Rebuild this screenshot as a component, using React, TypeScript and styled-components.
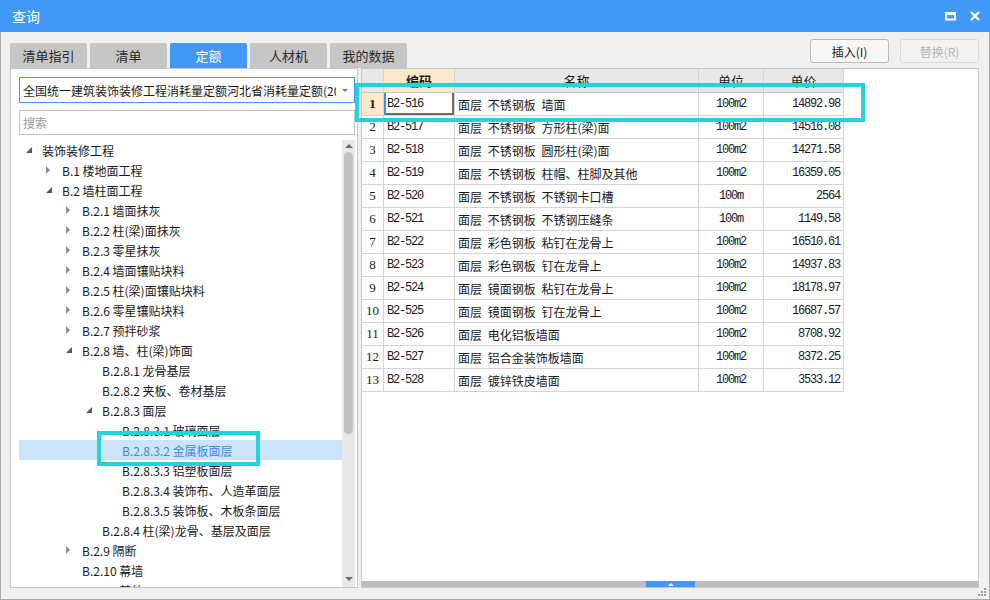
import React from 'react'
import styled, { createGlobalStyle } from 'styled-components'

const BLUE = '#4298f7'
const CJK = "'Noto Sans CJK SC', 'Microsoft YaHei', sans-serif"
const MONO = "'Liberation Mono', 'Noto Sans CJK SC', monospace"

const GlobalStyle = createGlobalStyle`
  html, body {
    margin: 0;
    padding: 0;
    background: #f0f0f0;
  }
  body {
    font-family: ${CJK};
    font-size: 12px;
    color: #1a1a1a;
  }
`

const Window = styled.div`
  position: relative;
  width: 990px;
  height: 600px;
  display: flex;
  flex-direction: column;
  background: #f0f0f0;
  overflow: hidden;
`

const TitleBar = styled.div`
  height: 32px;
  flex: none;
  background: ${BLUE};
  color: white;
  display: flex;
  align-items: center;
  justify-content: space-between;
  padding: 0 10px 0 12px;
  font-size: 14px;
  line-height: 32px;
`

const TitleIcons = styled.div`
  display: flex;
  align-items: center;
  gap: 14px;
`

const Body = styled.div`
  flex: 1;
  box-sizing: border-box;
  border: 1px solid #a9a9a9;
  border-top: none;
  padding: 7px 10px 0 9px;
  display: flex;
  flex-direction: column;
`

const TopRow = styled.div`
  height: 29px;
  display: flex;
  justify-content: space-between;
`

const Tabs = styled.div`
  display: flex;
  gap: 3px;
  align-self: flex-end;
`

const Tab = styled.div<{ $active?: boolean }>`
  width: 77px;
  height: 25px;
  border-radius: 2px 2px 0 0;
  display: flex;
  align-items: center;
  justify-content: center;
  font-size: 13px;
  background: ${p => (p.$active ? BLUE : '#c6c6c6')};
  color: ${p => (p.$active ? '#fff' : '#2a2a2a')};
`

const Buttons = styled.div`
  display: flex;
  gap: 11px;
  align-self: flex-start;
`

const ActionButton = styled.div<{ $disabled?: boolean }>`
  width: 79px;
  height: 24px;
  box-sizing: border-box;
  border: 1px solid ${p => (p.$disabled ? '#d9d9d9' : '#b9b9b9')};
  border-radius: 3px;
  background: ${p => (p.$disabled ? '#f3f3f3' : '#f7f7f7')};
  color: ${p => (p.$disabled ? '#b3b3b3' : '#1a1a1a')};
  display: flex;
  align-items: center;
  justify-content: center;
  font-size: 12px;
`

const Main = styled.div`
  height: 520px;
  display: flex;
  gap: 3px;
`

const LeftPanel = styled.div`
  width: 348px;
  box-sizing: border-box;
  border: 1px solid #c6c6c6;
  background: white;
  padding: 8px 2px 0 8px;
  display: flex;
  flex-direction: column;
`

const Dropdown = styled.div`
  height: 26px;
  box-sizing: border-box;
  border: 1px solid ${BLUE};
  display: flex;
  align-items: center;
  padding: 0 6px 0 3px;
  font-size: 12px;
`

const DropdownText = styled.div`
  flex: 1;
  overflow: hidden;
  white-space: nowrap;
  margin-right: 6px;
`

const Caret = styled.div`
  width: 0;
  height: 0;
  border-left: 3px solid transparent;
  border-right: 3px solid transparent;
  border-top: 3px solid #7a7a7a;
`

const Search = styled.div`
  margin-top: 7px;
  height: 25px;
  box-sizing: border-box;
  border: 1px solid #c3c3c3;
  display: flex;
  align-items: center;
  padding-left: 3px;
  color: #9a9a9a;
  font-size: 12px;
`

const TreeArea = styled.div`
  margin-top: 5px;
  flex: 1;
  display: flex;
  overflow: hidden;
`

const Tree = styled.div`
  flex: 1;
  overflow: hidden;
`

const TreeRow = styled.div<{ $level: number; $selected?: boolean }>`
  height: 20px;
  display: flex;
  align-items: center;
  padding-left: ${p => 7 + p.$level * 20}px;
  white-space: nowrap;
  font-size: 12px;
  background: ${p => (p.$selected ? '#cce4f7' : 'transparent')};
  color: ${p => (p.$selected ? '#3a8be4' : '#1a1a1a')};
`

const Toggle = styled.span`
  width: 16px;
  flex: none;
  display: flex;
  align-items: center;
`

const Closed = styled.span`
  width: 0;
  height: 0;
  border-left: 4px solid #8c8c8c;
  border-top: 4px solid transparent;
  border-bottom: 4px solid transparent;
`

const Opened = styled.span`
  width: 0;
  height: 0;
  border-left: 6px solid transparent;
  border-bottom: 6px solid #595959;
`

const VScroll = styled.div`
  width: 13px;
  background: #e8e8e8;
  display: flex;
  flex-direction: column;
  align-items: center;
`

const ScrollArrow = styled.div<{ $down?: boolean }>`
  width: 0;
  height: 0;
  margin: ${p => (p.$down ? 'auto 0 6px' : '4px 0 4px')};
  border-left: 4px solid transparent;
  border-right: 4px solid transparent;
  ${p => (p.$down ? 'border-top: 4px solid #6e6e6e;' : 'border-bottom: 4px solid #6e6e6e;')}
`

const Thumb = styled.div`
  width: 9px;
  height: 282px;
  border-radius: 5px;
  background: #c2c2c2;
`

const RightPanel = styled.div`
  flex: 1;
  box-sizing: border-box;
  border: 1px solid #c6c6c6;
  background: white;
  display: flex;
  flex-direction: column;
`

const Grid = styled.div`
  display: grid;
  grid-template-columns: 22px 71px 244px 65px 80px;
  width: 482px;
`

const Cell = styled.div<{
  $align?: 'left' | 'center' | 'right'
  $bg?: string
  $h?: number
  $mono?: boolean
  $bold?: boolean
  $serif?: boolean
  $active?: boolean
}>`
  box-sizing: border-box;
  height: ${p => p.$h || 23}px;
  border-right: 1px solid #d4d4d4;
  border-bottom: 1px solid #d4d4d4;
  display: flex;
  align-items: center;
  justify-content: ${p => (p.$align === 'right' ? 'flex-end' : p.$align === 'center' ? 'center' : 'flex-start')};
  padding: 0 3px;
  white-space: nowrap;
  overflow: hidden;
  background: ${p => p.$bg || 'white'};
  font-weight: ${p => (p.$bold ? 'bold' : 'normal')};
  font-family: ${p => (p.$mono ? MONO : p.$serif ? "'Liberation Serif', serif" : CJK)};
  font-size: ${p => (p.$mono ? '12px' : p.$serif ? '13px' : '12px')};
  letter-spacing: ${p => (p.$mono ? '-1.2px' : '0')};
  word-spacing: 3px;
  ${p => (p.$active ? `box-shadow: inset 2px 0 0 #3b8eea, inset -2px -2px 0 #6a6a6a;` : '')}
`

const HeadCell = styled(Cell)`
  font-size: 13px;
  border-bottom-color: #c8c8c8;
`

const Filler = styled.div`
  flex: 1;
`

const HBar = styled.div`
  height: 6px;
  background: #bdbdbd;
  display: flex;
`

const HHandle = styled.div`
  margin-left: 284px;
  width: 49px;
  background: ${BLUE};
  display: flex;
  align-items: center;
  justify-content: center;
`

const HHandleArrow = styled.div`
  width: 0;
  height: 0;
  border-left: 3px solid transparent;
  border-right: 3px solid transparent;
  border-bottom: 3px solid white;
`

const Grip = styled.svg`
  position: absolute;
  right: 4px;
  bottom: 4px;
`

const Mark = styled.div<{ $x: number; $y: number; $w: number; $h: number }>`
  position: absolute;
  left: ${p => p.$x}px;
  top: ${p => p.$y}px;
  width: ${p => p.$w}px;
  height: ${p => p.$h}px;
  box-sizing: border-box;
  border: 4px solid #22d4d8;
  pointer-events: none;
`

type Node = { level: number; text: string; state: 'open' | 'closed' | 'leaf'; selected?: boolean }

const tree: Node[] = [
  { level: 0, text: '装饰装修工程', state: 'open' },
  { level: 1, text: 'B.1 楼地面工程', state: 'closed' },
  { level: 1, text: 'B.2 墙柱面工程', state: 'open' },
  { level: 2, text: 'B.2.1 墙面抹灰', state: 'closed' },
  { level: 2, text: 'B.2.2 柱(梁)面抹灰', state: 'closed' },
  { level: 2, text: 'B.2.3 零星抹灰', state: 'closed' },
  { level: 2, text: 'B.2.4 墙面镶贴块料', state: 'closed' },
  { level: 2, text: 'B.2.5 柱(梁)面镶贴块料', state: 'closed' },
  { level: 2, text: 'B.2.6 零星镶贴块料', state: 'closed' },
  { level: 2, text: 'B.2.7 预拌砂浆', state: 'closed' },
  { level: 2, text: 'B.2.8 墙、柱(梁)饰面', state: 'open' },
  { level: 3, text: 'B.2.8.1 龙骨基层', state: 'leaf' },
  { level: 3, text: 'B.2.8.2 夹板、卷材基层', state: 'leaf' },
  { level: 3, text: 'B.2.8.3 面层', state: 'open' },
  { level: 4, text: 'B.2.8.3.1 玻璃面层', state: 'leaf' },
  { level: 4, text: 'B.2.8.3.2 金属板面层', state: 'leaf', selected: true },
  { level: 4, text: 'B.2.8.3.3 铝塑板面层', state: 'leaf' },
  { level: 4, text: 'B.2.8.3.4 装饰布、人造革面层', state: 'leaf' },
  { level: 4, text: 'B.2.8.3.5 装饰板、木板条面层', state: 'leaf' },
  { level: 3, text: 'B.2.8.4 柱(梁)龙骨、基层及面层', state: 'leaf' },
  { level: 2, text: 'B.2.9 隔断', state: 'closed' },
  { level: 2, text: 'B.2.10 幕墙', state: 'leaf' },
  { level: 2, text: 'B.2.11 其他', state: 'leaf' }
]

const rows = [
  ['B2-516', '面层 不锈钢板 墙面', '100m2', '14892.98'],
  ['B2-517', '面层 不锈钢板 方形柱(梁)面', '100m2', '14516.08'],
  ['B2-518', '面层 不锈钢板 圆形柱(梁)面', '100m2', '14271.58'],
  ['B2-519', '面层 不锈钢板 柱帽、柱脚及其他', '100m2', '16359.05'],
  ['B2-520', '面层 不锈钢板 不锈钢卡口槽', '100m', '2564'],
  ['B2-521', '面层 不锈钢板 不锈钢压缝条', '100m', '1149.58'],
  ['B2-522', '面层 彩色钢板 粘钉在龙骨上', '100m2', '16510.61'],
  ['B2-523', '面层 彩色钢板 钉在龙骨上', '100m2', '14937.83'],
  ['B2-524', '面层 镜面钢板 粘钉在龙骨上', '100m2', '18178.97'],
  ['B2-525', '面层 镜面钢板 钉在龙骨上', '100m2', '16687.57'],
  ['B2-526', '面层 电化铝板墙面', '100m2', '8708.92'],
  ['B2-527', '面层 铝合金装饰板墙面', '100m2', '8372.25'],
  ['B2-528', '面层 镀锌铁皮墙面', '100m2', '3533.12']
]

const PEACH = '#fde8cb'
const HEAD = '#e8e8e8'

const App: React.FC = () => {
  return (
    <Window>
      <GlobalStyle />
      <TitleBar>
        <span>查询</span>
        <TitleIcons>
          <svg width="11" height="9" viewBox="0 0 11 9">
            <rect x="1" y="1.5" width="9" height="6" fill="none" stroke="white" strokeWidth="2" />
            <rect x="0" y="0" width="11" height="3" fill="white" />
          </svg>
          <svg width="10" height="10" viewBox="0 0 10 10">
            <path d="M1 1 L9 9 M9 1 L1 9" stroke="white" strokeWidth="2.2" />
          </svg>
        </TitleIcons>
      </TitleBar>
      <Body>
        <TopRow>
          <Tabs>
            <Tab>清单指引</Tab>
            <Tab>清单</Tab>
            <Tab $active>定额</Tab>
            <Tab>人材机</Tab>
            <Tab>我的数据</Tab>
          </Tabs>
          <Buttons>
            <ActionButton>插入(I)</ActionButton>
            <ActionButton $disabled>替换(R)</ActionButton>
          </Buttons>
        </TopRow>
        <Main>
          <LeftPanel>
            <Dropdown>
              <DropdownText>全国统一建筑装饰装修工程消耗量定额河北省消耗量定额(2012)</DropdownText>
              <Caret />
            </Dropdown>
            <Search>搜索</Search>
            <TreeArea>
              <Tree>
                {tree.map(n => (
                  <TreeRow key={n.text} $level={n.level} $selected={n.selected}>
                    <Toggle>
                      {n.state === 'open' && <Opened />}
                      {n.state === 'closed' && <Closed />}
                    </Toggle>
                    {n.text}
                  </TreeRow>
                ))}
              </Tree>
              <VScroll>
                <ScrollArrow />
                <Thumb />
                <ScrollArrow $down />
              </VScroll>
            </TreeArea>
          </LeftPanel>
          <RightPanel>
            <Grid>
              <HeadCell $h={24} $bg={HEAD} />
              <HeadCell $h={24} $bg={PEACH} $align="center" $bold>编码</HeadCell>
              <HeadCell $h={24} $bg={HEAD} $align="center">名称</HeadCell>
              <HeadCell $h={24} $bg={HEAD} $align="center">单位</HeadCell>
              <HeadCell $h={24} $bg={HEAD} $align="center">单价</HeadCell>
              {rows.map((r, i) => (
                <React.Fragment key={r[0]}>
                  <Cell $align="center" $serif $bold={i === 0} $bg={i === 0 ? PEACH : 'white'}>
                    {i + 1}
                  </Cell>
                  <Cell $mono $active={i === 0}>{r[0]}</Cell>
                  <Cell>{r[1]}</Cell>
                  <Cell $mono $align="center">{r[2]}</Cell>
                  <Cell $mono $align="right">{r[3]}</Cell>
                </React.Fragment>
              ))}
            </Grid>
            <Filler />
            <HBar>
              <HHandle>
                <HHandleArrow />
              </HHandle>
            </HBar>
          </RightPanel>
        </Main>
      </Body>
      <Grip width="8" height="8" viewBox="0 0 8 8">
        <rect x="6" y="0" width="2" height="2" fill="#a0a0a0" />
        <rect x="3" y="3" width="2" height="2" fill="#a0a0a0" />
        <rect x="6" y="3" width="2" height="2" fill="#a0a0a0" />
        <rect x="0" y="6" width="2" height="2" fill="#a0a0a0" />
        <rect x="3" y="6" width="2" height="2" fill="#a0a0a0" />
        <rect x="6" y="6" width="2" height="2" fill="#a0a0a0" />
      </Grip>
      <Mark $x={355} $y={83} $w={510} $h={39} />
      <Mark $x={97} $y={431} $w={163} $h={35} />
    </Window>
  )
}

export default App
